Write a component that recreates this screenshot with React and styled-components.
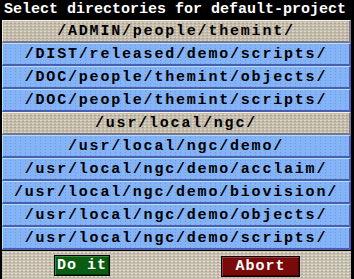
import React from 'react';
import styled, { createGlobalStyle, css } from 'styled-components';

const GlobalStyle = createGlobalStyle`
  html, body {
    margin: 0;
    padding: 0;
    background: #000;
  }
`;

const Window = styled.div`
  width: 354px;
  height: 279px;
  background: #000;
  display: flex;
  flex-direction: column;
  font-family: 'Liberation Mono', 'DejaVu Sans Mono', monospace;
  font-weight: bold;
  overflow: hidden;
`;

const TitleBar = styled.div`
  height: 20px;
  line-height: 20px;
  padding-left: 4px;
  color: #fff;
  font-size: 15px;
  white-space: nowrap;
`;

const DirList = styled.div`
  display: flex;
  flex-direction: column;
  padding: 0 3px 0 2px;
`;

const beige = css`
  background-color: #c4bcac;
  background-image: radial-gradient(rgba(236, 228, 200, 0.7) 0.7px, transparent 1px),
    radial-gradient(rgba(150, 140, 130, 0.45) 0.7px, transparent 1px);
  background-size: 4px 3px, 4px 3px;
  background-position: 0 0, 2px 1px;
  border-color: #f4f0e4 #7c7490 #7c7490 #f4f0e4;
`;

const blue = css`
  background-color: #84b4f6;
  background-image: radial-gradient(rgba(90, 120, 230, 0.5) 0.7px, transparent 1px);
  background-size: 5px 3px;
  border-color: #a8e4f4 #4c5cb0 #4c5cb0 #a8e4f4;
`;

const DirRow = styled.div`
  box-sizing: border-box;
  height: 23px;
  border-style: solid;
  border-width: 1px 2px 2px 1px;
  ${(p) => (p.$alt ? beige : blue)}
  display: flex;
  align-items: center;
  justify-content: center;
  color: #000;
  font-size: 15px;
  letter-spacing: 1.8px;
  white-space: nowrap;
`;

const Footer = styled.div`
  box-sizing: border-box;
  margin: 1px 3px 0 2px;
  height: 28px;
  display: flex;
  align-items: center;
  gap: 111px;
  padding-left: 52px;
  background-color: #c8c0b0;
  background-image: radial-gradient(rgba(236, 230, 210, 0.8) 0.7px, transparent 1px),
    radial-gradient(rgba(150, 145, 135, 0.5) 0.7px, transparent 1px);
  background-size: 4px 3px, 4px 3px;
  background-position: 0 0, 2px 1px;
`;

const Button = styled.button`
  box-sizing: border-box;
  height: 21px;
  width: ${(p) => p.$w}px;
  margin-top: ${(p) => p.$dy || 0}px;
  padding: 0;
  border: 1px solid #000;
  box-shadow: inset 1px 1px 0 ${(p) => p.$light}, inset -1px -1px 0 ${(p) => p.$dark};
  background: ${(p) => p.$bg};
  color: #fff;
  font-family: inherit;
  font-weight: bold;
  font-size: 15px;
  letter-spacing: 1px;
`;

const dirs = [
  ['/ADMIN/people/themint/', true],
  ['/DIST/released/demo/scripts/'],
  ['/DOC/people/themint/objects/'],
  ['/DOC/people/themint/scripts/'],
  ['/usr/local/ngc/', true],
  ['/usr/local/ngc/demo/'],
  ['/usr/local/ngc/demo/acclaim/'],
  ['/usr/local/ngc/demo/biovision/'],
  ['/usr/local/ngc/demo/objects/'],
  ['/usr/local/ngc/demo/scripts/'],
];

export default function App() {
  return (
    <Window>
      <GlobalStyle />
      <TitleBar>Select directories for default-project</TitleBar>
      <DirList>
        {dirs.map(([path, alt]) => (
          <DirRow key={path} $alt={alt}>
            {path}
          </DirRow>
        ))}
      </DirList>
      <Footer>
        <Button $w={56} $bg="#0a5c10" $light="#3c8a3c" $dark="#043a06">
          Do it
        </Button>
        <Button $w={79} $dy={2} $bg="#7a0a0a" $light="#a03838" $dark="#4a0404">
          Abort
        </Button>
      </Footer>
    </Window>
  );
}
